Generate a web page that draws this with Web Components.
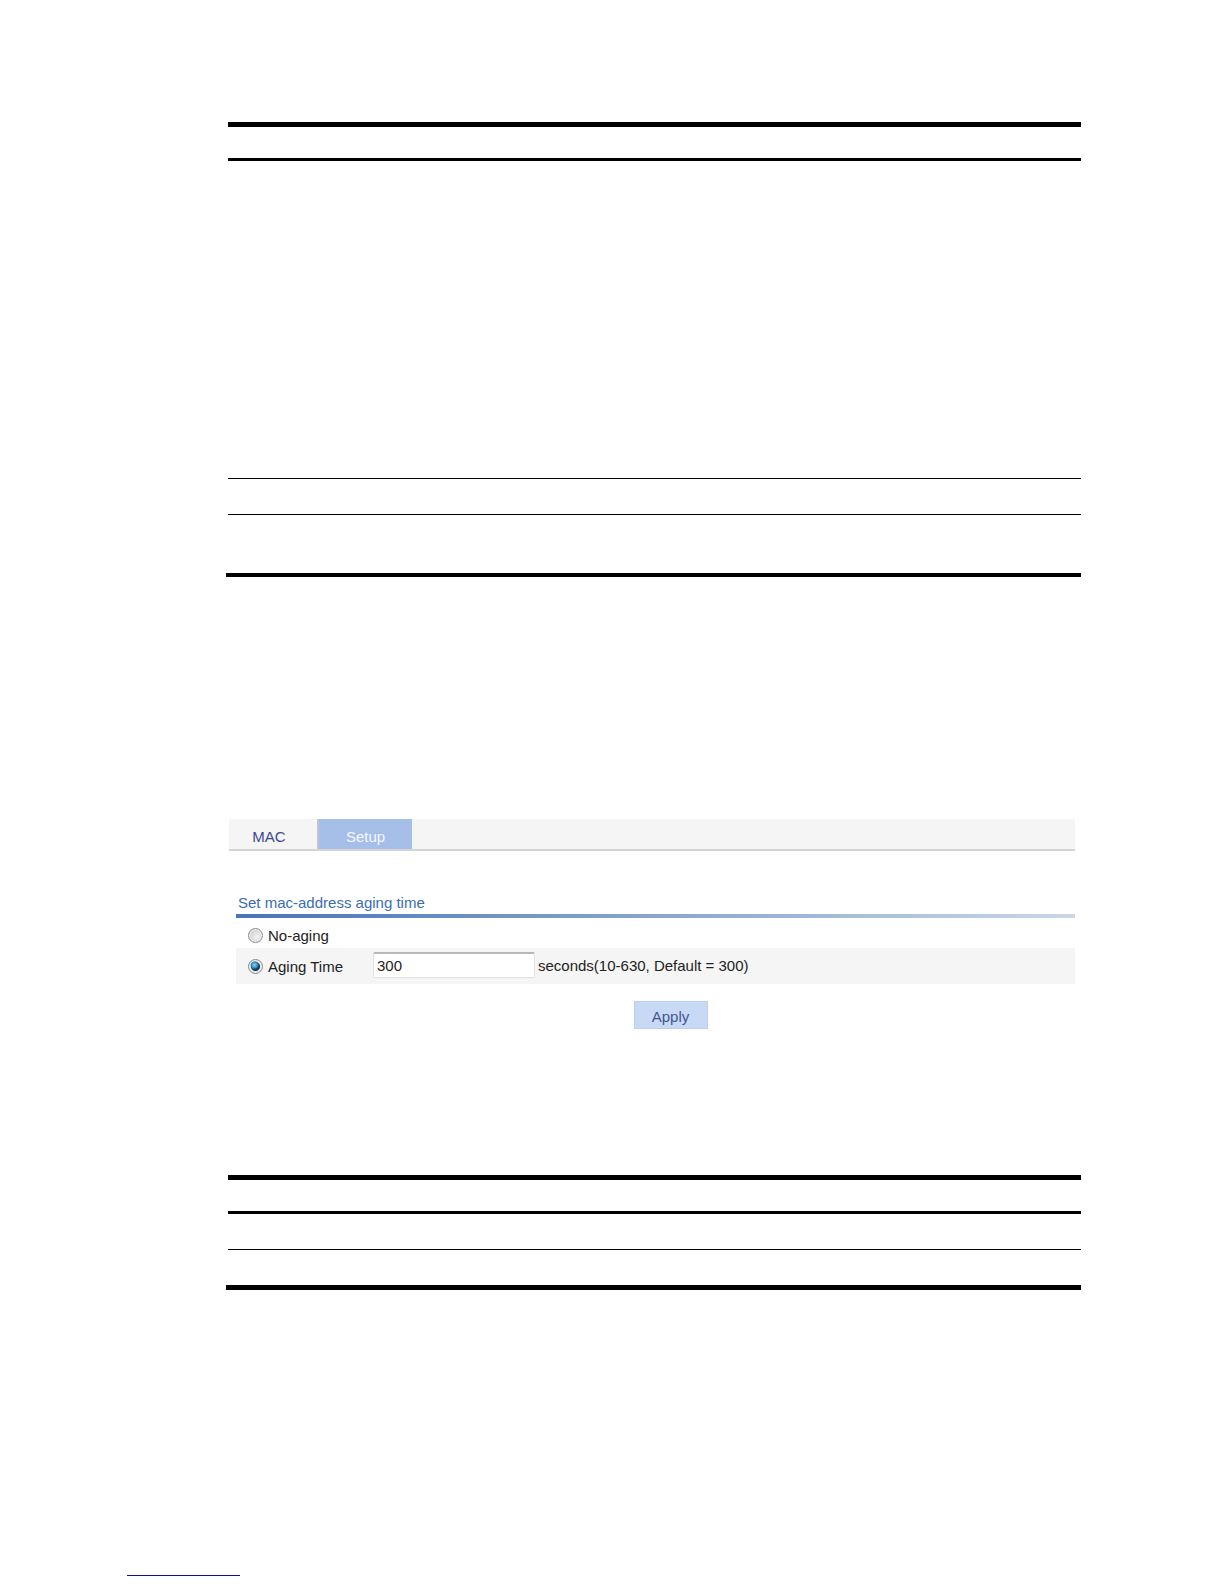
<!DOCTYPE html>
<html lang="en">
<head>
<meta charset="utf-8">
<title>MAC setup</title>
<style>
body { margin: 0; background: #fff; font: 15px/20px "Liberation Sans", Arial, sans-serif; color: #222; }
</style>
</head>
<body>
<manual-page></manual-page>
<script>
class RuledTable extends HTMLElement {
  connectedCallback() {
    const heights = this.getAttribute('rows').split(' ');
    const rows = heights.map(h => `<tr style="height:${h}px"><td></td><td></td></tr>`).join('');
    this.attachShadow({ mode: 'open' }).innerHTML = `
      <style>
        :host { display: block; padding-left: 2px; border-bottom: var(--end-rule, 5px) solid #000; }
        table { width: 100%; border-collapse: separate; border-spacing: 0; border-top: 5px solid #000; }
        th, td { padding: 0; box-sizing: border-box; }
        thead tr { height: 34px; }
        th { border-bottom: 3px solid #000; }
        tbody tr:not(:last-child) td { border-bottom: 1px solid #000; }
      </style>
      <table><thead><tr><th></th><th></th></tr></thead><tbody>${rows}</tbody></table>`;
  }
}
customElements.define('ruled-table', RuledTable);

class TabBar extends HTMLElement {
  connectedCallback() {
    this.attachShadow({ mode: 'open' }).innerHTML = `
      <style>
        :host { display: block; }
        nav { display: flex; height: 30px; background: #f5f5f5; border-bottom: 2px solid #d4d4d4; }
        a { box-sizing: border-box; width: 88px; padding: 8px 8px 0 0; text-align: center; font-size: 15px; line-height: 20px; color: #3a4a90; text-decoration: none; }
        a[aria-current] { width: 95px; padding-right: 0; border-left: 2px solid #c4c4c8; background: #a6bfe8; color: #f4f8ff; }
      </style>
      <nav><a href="#mac">MAC</a><a href="#setup" aria-current="page">Setup</a></nav>`;
  }
}
customElements.define('tab-bar', TabBar);

class AgingForm extends HTMLElement {
  connectedCallback() {
    this.attachShadow({ mode: 'open' }).innerHTML = `
      <style>
        :host { display: block; padding-left: 7px; }
        h2 { margin: 0; padding: 0 2px 1px; font-size: 15px; line-height: 20px; font-weight: 400; color: #3b6db3; }
        .rule { height: 4px; background: linear-gradient(90deg, #4875b5, #c9d7e6); }
        .row { display: flex; align-items: center; box-sizing: border-box; height: 36px; padding-left: 12px; }
        .row.first { height: 30px; padding-top: 4px; }
        .shade { background: #f5f5f5; }
        .choice { display: flex; align-items: center; gap: 5px; width: 125px; }
        span { padding-top: 2px; }
        input[type=radio] { appearance: none; box-sizing: border-box; width: 15px; height: 15px; margin: 0; border: 1px solid #8b8b8b; border-radius: 50%; background: radial-gradient(circle at 60% 60%, #f2f2f2, #c5c5c5); box-shadow: inset 0 0 0 1px #f4f4f4; }
        input[type=radio]:checked { background: radial-gradient(circle at 42% 38%, #8ed4f2 0, #2b83b0 30%, transparent 40%), radial-gradient(circle, #123a5c 4px, #dedede 5px); }
        input[type=text] { box-sizing: border-box; width: 162px; height: 26px; margin: 0 3px 2px 0; padding: 0 3px 1px; border: 1px solid #dfe3e6; border-top: 2px solid #b8b8b8; border-radius: 2px; background: #fff; color: #222; font: inherit; }
        .actions { display: flex; justify-content: center; padding: 17px 0 0 30px; }
        button { width: 74px; height: 28px; padding: 3px 0 0; border: 1px solid #bccfed; background: #c8d9f5; color: #45558f; font: inherit; }
      </style>
      <form>
        <h2>Set mac-address aging time</h2>
        <div class="rule"></div>
        <div class="row first"><label class="choice"><input type="radio" name="mode"><span>No-aging</span></label></div>
        <div class="row shade">
          <label class="choice"><input type="radio" name="mode" checked><span>Aging Time</span></label>
          <input type="text" id="secs" value="300"><label for="secs"><span>seconds(10-630, Default = 300)</span></label>
        </div>
        <div class="actions"><button type="button">Apply</button></div>
      </form>`;
  }
}
customElements.define('aging-form', AgingForm);

class ManualPage extends HTMLElement {
  connectedCallback() {
    this.attachShadow({ mode: 'open' }).innerHTML = `
      <style>
        :host { display: block; }
        main { padding: 122px 143px 0 226px; }
        .upper { --end-rule: 4px; }
        .panel { margin: 242px 6px 146px 3px; }
        aging-form { margin-top: 42px; }
        footer { padding: 265px 0 0 127px; }
        footer a { display: block; width: 113px; height: 20px; border-bottom: 1px solid #1010a0; }
      </style>
      <main>
        <ruled-table class="upper" rows="318 36 58"></ruled-table>
        <section class="panel"><tab-bar></tab-bar><aging-form></aging-form></section>
        <ruled-table rows="36 35"></ruled-table>
      </main>
      <footer><a href="#contents" aria-label="Contents"></a></footer>`;
  }
}
customElements.define('manual-page', ManualPage);
</script>
</body>
</html>
